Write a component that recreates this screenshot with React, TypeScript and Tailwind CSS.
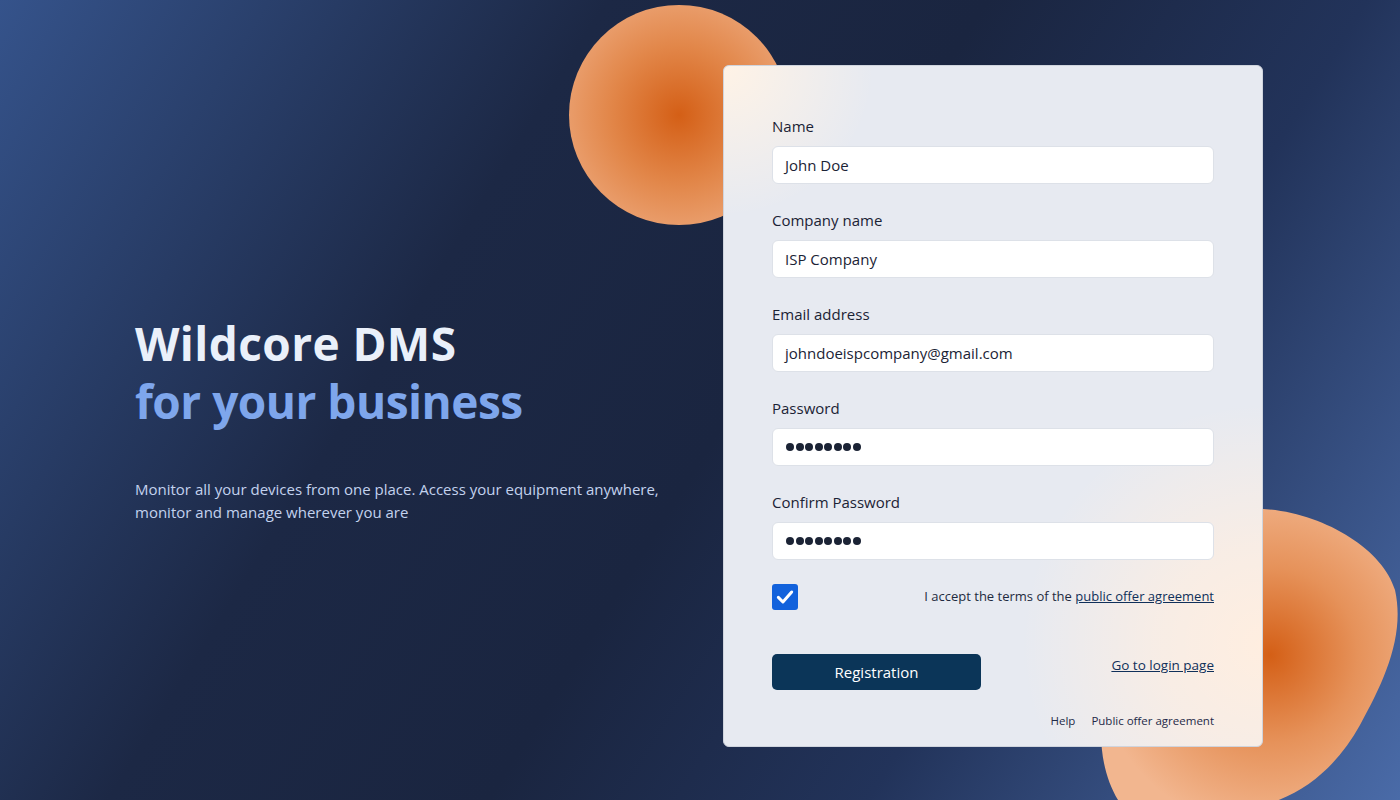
import React from "react";

function Field({ label, value, password }: { label: string; value: string; password?: boolean }) {
  return (
    <div className="flex flex-col">
      <label className="text-[15px] leading-[20px] text-[#1b2335] mb-[10px] pt-[1px] -mt-[1px]">{label}</label>
      <div className="h-[38px] rounded-[6px] bg-white border border-[#dde1e8] flex items-center px-[12px] text-[15px] text-[#1b2335]">
        {password ? (
          <span className="flex gap-[1.5px] pl-[1px]">
            {Array.from({ length: 8 }).map((_, i) => (
              <span key={i} className="w-[8px] h-[8px] rounded-full bg-[#1b2335]" />
            ))}
          </span>
        ) : (
          value
        )}
      </div>
    </div>
  );
}

export default function App() {
  return (
    <div
      className="relative w-[1400px] h-[800px] overflow-hidden bg-[linear-gradient(122deg,#35538b_0%,#1c2845_32%,#1a2540_52%,#22335a_72%,#4a6ba8_100%)]"
      style={{ fontFamily: '"Open Sans", "Noto Sans", sans-serif' }}
    >
      {/* top circle */}
      <div className="absolute left-[569px] top-[5px] w-[220px] h-[220px] rounded-full bg-[radial-gradient(circle_at_50%_50%,#d45f16_0%,#e2874a_45%,#f1b48e_100%)]" />
      {/* bottom blob */}
      <svg className="absolute left-[1095px] top-[505px]" width="305" height="300" viewBox="0 0 305 300">
        <defs>
          <radialGradient id="bg2" cx="175" cy="150" r="175" gradientUnits="userSpaceOnUse">
            <stop offset="0" stopColor="#d45f16" />
            <stop offset="0.5" stopColor="#e6925a" />
            <stop offset="1" stopColor="#f2b68f" />
          </radialGradient>
        </defs>
        <path
          d="M150 4 C215 0 287 40 300 85 C310 130 290 175 265 220 C240 265 200 300 140 305 L30 305 C10 280 0 240 10 190 C25 110 60 12 150 4 Z"
          fill="url(#bg2)"
        />
      </svg>

      <div className="relative flex h-full">
        {/* left text */}
        <div className="w-[723px] pl-[135px] pt-[314px]">
          <h1 className="text-[46px] leading-[58px] font-bold text-[#eaf0fa] tracking-[0.4px]">Wildcore DMS</h1>
          <h2 className="text-[46px] leading-[58px] font-bold text-[#7ea6ec] tracking-[-0.5px]">for your business</h2>
          <p className="mt-[48px] text-[15px] leading-[23px] text-[#c3d2ee] w-[540px]">
            Monitor all your devices from one place. Access your equipment anywhere, monitor and manage wherever you are
          </p>
        </div>

        {/* card */}
        <div className="mt-[65px] w-[540px] h-[682px] rounded-[6px] border border-[#cfd4dd] bg-[#e7eaf1] bg-[radial-gradient(circle_at_0%_0%,rgba(255,243,230,1)_0px,rgba(255,243,230,0)_150px),radial-gradient(circle_at_100%_85%,rgba(255,238,224,1)_0px,rgba(255,238,224,0.7)_100px,rgba(255,238,224,0)_240px)] px-[48px] pt-[50px] flex flex-col">
          <div className="flex flex-col gap-[26px]">
            <Field label="Name" value="John Doe" />
            <Field label="Company name" value="ISP Company" />
            <Field label="Email address" value="johndoeispcompany@gmail.com" />
            <Field label="Password" value="" password />
            <Field label="Confirm Password" value="" password />
          </div>

          <div className="mt-[24px] flex items-center justify-between">
            <div className="w-[26px] h-[26px] rounded-[3px] bg-[#1262dc] flex items-center justify-center">
              <svg width="20" height="20" viewBox="0 0 24 24" fill="none" stroke="white" strokeWidth="3.6" strokeLinecap="round" strokeLinejoin="round">
                <path d="M4 12.5 L9.5 18 L20 6" />
              </svg>
            </div>
            <div className="text-[13px] text-[#1e2a40]">
              I accept the terms of the <span className="underline text-[#10305a]">public offer agreement</span>
            </div>
          </div>

          <div className="mt-[44px] flex items-start justify-between">
            <button className="w-[209px] h-[36px] rounded-[5px] bg-[#0b3558] text-white text-[15px]">Registration</button>
            <a className="text-[13.5px] underline text-[#10305a] mt-[1px]">Go to login page</a>
          </div>

          <div className="mt-[22px] flex justify-end gap-[16px] text-[11.5px] text-[#1e2a48]">
            <span>Help</span>
            <span>Public offer agreement</span>
          </div>
        </div>
      </div>
    </div>
  );
}
